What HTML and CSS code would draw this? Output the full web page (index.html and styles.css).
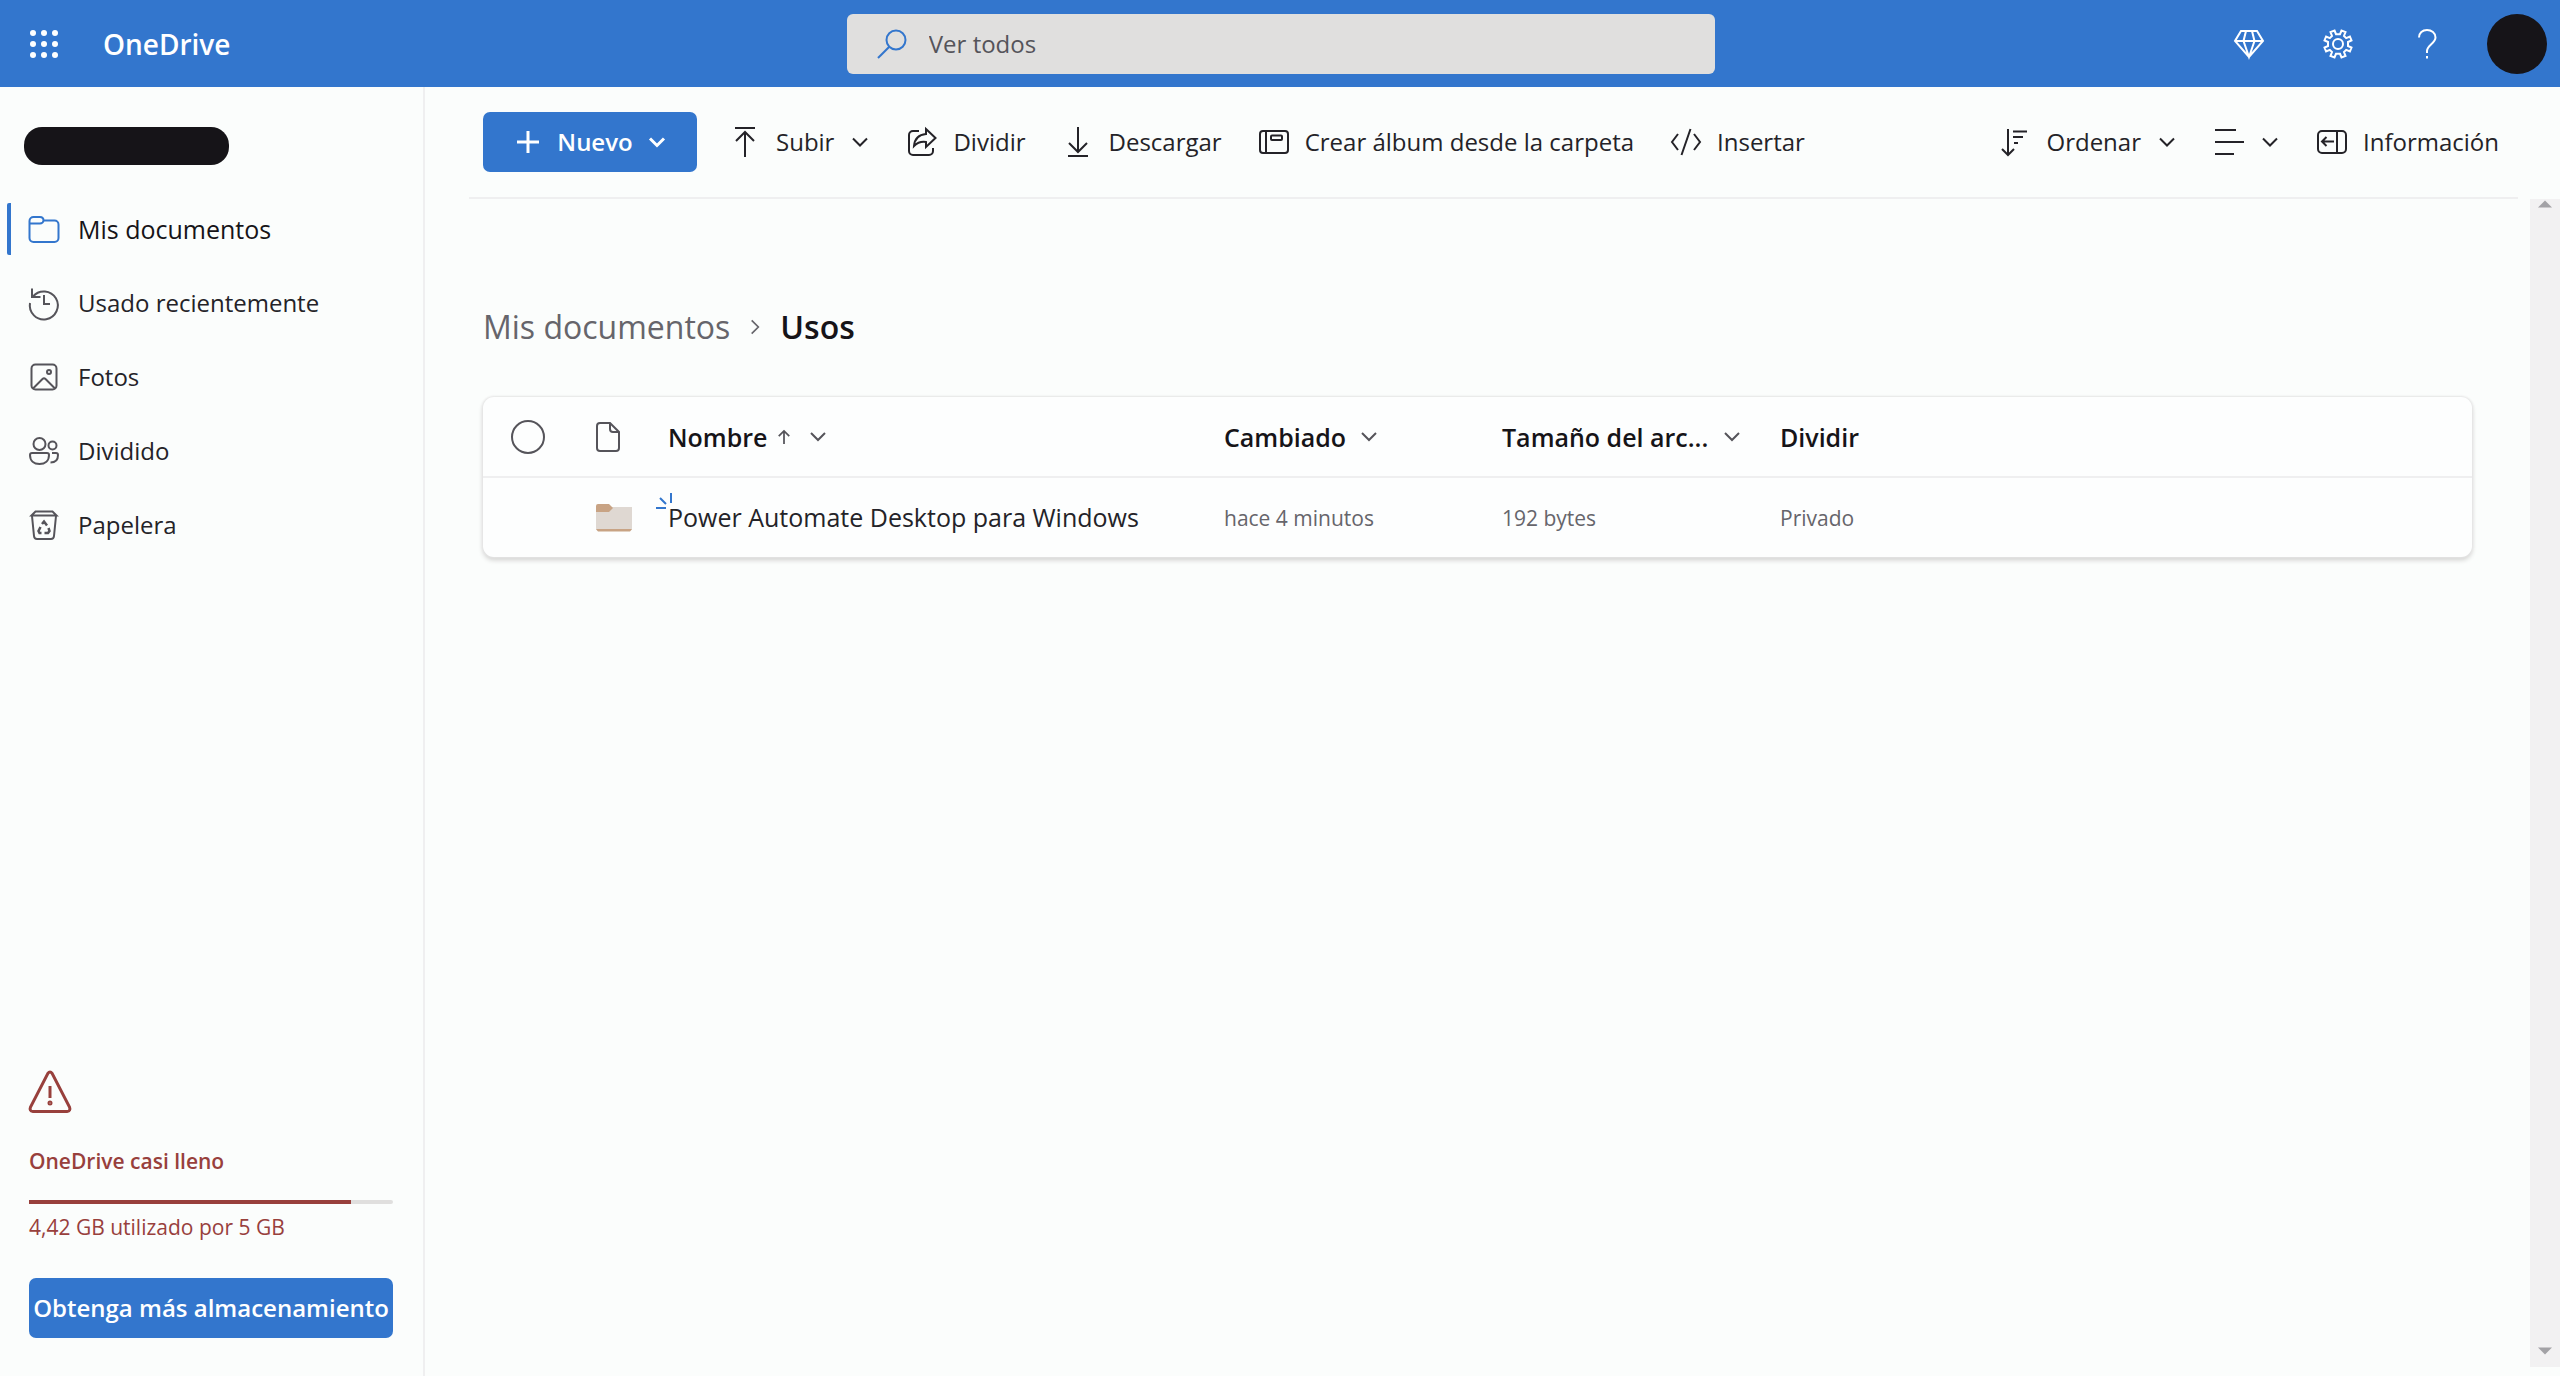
FILE: index.html
```html
<!DOCTYPE html>
<html lang="es">
<head>
<meta charset="utf-8">
<meta name="viewport" content="width=device-width, initial-scale=1">
<title>Usos - OneDrive</title>
<link rel="stylesheet" href="styles.css">
</head>
<body>
<header class="topbar">
  <div class="brand">
    <button class="icon-button launcher" aria-label="Iniciador de aplicaciones">
      <svg class="icon" viewBox="0 0 30 30" fill="currentColor"><circle cx="4" cy="4" r="3"/><circle cx="15" cy="4" r="3"/><circle cx="26" cy="4" r="3"/><circle cx="4" cy="15" r="3"/><circle cx="15" cy="15" r="3"/><circle cx="26" cy="15" r="3"/><circle cx="4" cy="26" r="3"/><circle cx="15" cy="26" r="3"/><circle cx="26" cy="26" r="3"/></svg>
    </button>
    <a class="brand-name" href="#">OneDrive</a>
  </div>
  <label class="search">
    <svg class="icon search-icon" viewBox="0 0 30 30"><circle cx="19" cy="11" r="9.5"/><path d="M12.3 17.7 1 29"/></svg>
    <input class="search-input" type="search" placeholder="Ver todos" aria-label="Buscar">
  </label>
  <div class="top-actions">
    <button class="icon-button" aria-label="Premium"><svg class="icon" viewBox="0 0 30 30"><path d="M7 2h16l6 10-14 16L1 12zM1 12h28M12 2l-2.500 10L15 28l5.500-16L18 2"/></svg></button>
    <button class="icon-button" aria-label="Configuración"><svg class="icon" viewBox="0 0 30 30"><circle cx="15" cy="15" r="5"/><path d="M11.500 1.500 13 5.200h4L18.500 1.500l4 1.600-1.500 3.800 2.200 2.200 3.700-1.600 1.600 4L25 13v4l3.500 1.500-1.600 4-3.700-1.600-2.200 2.200 1.500 3.800-4 1.600L17 24.800h-4l-1.500 3.700-4-1.600L9 23.100l-2.200-2.200-3.700 1.600-1.600-4L5 17v-4l-3.500-1.500 1.600-4 3.700 1.600L9 6.900 7.500 3.100z"/></svg></button>
    <button class="icon-button" aria-label="Ayuda"><svg class="icon" viewBox="0 0 30 30"><path d="M7 8.500C7 4 10.500 1 15 1s8.500 3 8.500 7.500c0 6-8.500 7.500-8.500 13.500v2M15 27v2.500"/></svg></button>
    <button class="avatar" aria-label="Cuenta"></button>
  </div>
</header>
<div class="shell">
  <aside class="sidebar">
    <div class="account-name"></div>
    <nav class="side-nav">
      <a class="nav-item selected" href="#"><svg class="icon" viewBox="0 0 30 30"><path d="M1 7.500V5a4 4 0 0 1 4-4h6.500c2 0 3.500 1.500 3.500 3.500H26a4 4 0 0 1 4 4V22a4 4 0 0 1-4 4H5a4 4 0 0 1-4-4zH11.500C13.500 7.500 15 6 15 4.500" transform="translate(-.500 2)"/></svg>Mis documentos</a>
      <a class="nav-item" href="#"><svg class="icon" viewBox="0 0 30 30"><path d="M3 .500V9h8.500M4 8.500A14 14 0 1 1 1 15M15 7v9h6"/></svg>Usado recientemente</a>
      <a class="nav-item" href="#"><svg class="icon" viewBox="0 0 30 30"><rect x="2.500" y="2.500" width="25" height="25" rx="4"/><circle cx="20" cy="10" r="2"/><path d="m4 26.500 9.500-9.500q1.500-1.500 3 0l9.500 9.500"/></svg>Fotos</a>
      <a class="nav-item" href="#"><svg class="icon" viewBox="0 0 30 30"><circle cx="10.500" cy="8" r="6"/><circle cx="23.500" cy="9.500" r="4"/><path d="M3 17h15q2 0 2 2c0 6-4 9-9.500 9S1 25 1 19q0-2 2-2zM23 17h4q2 0 2 2c0 5-3 7.500-7.500 7.500"/></svg>Dividido</a>
      <a class="nav-item" href="#"><svg class="icon" viewBox="0 0 30 30"><path d="m2.500 5.500 4-4h17l4 4zM3 6l2 20q.300 3 3 3h14q2.700 0 3-3l2-20"/><path d="m13 14 2-2.500 3 4M19.500 18l1 3-1.500 2h-3.500M12.500 23h-2l-1-2 2-4" stroke-width="2.500"/></svg>Papelera</a>
    </nav>
    <section class="storage">
      <svg class="warning-icon" viewBox="0 0 42 42"><path d="M18.800 2.500q2.200-2.800 4.400 0L40.500 36q1.500 4-2.500 4.500H4Q0 40 1.500 36z"/><path d="M21 15v12"/><circle cx="21" cy="32" r="1"/></svg>
      <h2 class="storage-title">OneDrive casi lleno</h2>
      <div class="meter" role="progressbar" aria-label="Almacenamiento" aria-valuenow="88"><div class="meter-fill" style="width: 88.400%"></div></div>
      <a class="storage-text" href="#">4,42 GB utilizado por 5 GB</a>
      <button class="primary upgrade">Obtenga más almacenamiento</button>
    </section>
  </aside>
  <main class="main">
    <div class="toolbar">
      <button class="primary new"><svg class="icon" viewBox="0 0 30 30"><path d="M4 15h22M15 4v22"/></svg>Nuevo<svg class="chevron" viewBox="0 0 16 16"><path d="m1 4.500 7 7 7-7"/></svg></button>
      <button class="command upload"><svg class="icon" viewBox="0 0 30 30"><path d="M5 1h20M15 30V5M6 14l9-9 9 9"/></svg>Subir<svg class="chevron" viewBox="0 0 16 16"><path d="m1 4.500 7 7 7-7"/></svg></button>
      <button class="command"><svg class="icon" viewBox="0 0 30 30"><path d="M12 4H6a4 4 0 0 0-4 4v16a4 4 0 0 0 4 4h16a4 4 0 0 0 4-4v-3"/><path d="m19 2 9.500 9L19 20v-5q-7-1-12 4 1-11 12-12z"/></svg>Dividir</button>
      <button class="command"><svg class="icon" viewBox="0 0 30 30"><path d="M15 0v25M6 16l9 9 9-9M5 29h20"/></svg>Descargar</button>
      <button class="command"><svg class="icon" viewBox="0 0 30 30"><rect x="1" y="4" width="28" height="22" rx="3"/><path d="M7 4v22"/><rect x="12" y="8.500" width="11" height="4.500" rx="1"/></svg>Crear álbum desde la carpeta</button>
      <button class="command"><svg class="icon" viewBox="0 0 30 30"><path d="m7 7-6 8 6 8M23 7l6 8-6 8M19.500 2l-9 26"/></svg>Insertar</button>
      <span class="spacer"></span>
      <button class="command"><svg class="icon" viewBox="0 0 30 30"><path d="M8 2v26M2 22l6 6 6-6M13 4.500h14M13 10h10M14 16h4"/></svg>Ordenar<svg class="chevron" viewBox="0 0 16 16"><path d="m1 4.500 7 7 7-7"/></svg></button>
      <button class="command" aria-label="Ver"><svg class="icon" viewBox="0 0 30 30"><path d="M1 3h21M1 15h29M1 27h19"/></svg><svg class="chevron" viewBox="0 0 16 16"><path d="m1 4.500 7 7 7-7"/></svg></button>
      <button class="command"><svg class="icon" viewBox="0 0 30 30"><rect x="1" y="4" width="28" height="22" rx="4"/><path d="M20 4v22M17 14.500H5M9.500 10 5 14.500 9.500 19"/></svg>Información</button>
    </div>
    <div class="content">
      <div class="page">
        <nav class="breadcrumb" aria-label="Ruta">
          <a class="crumb" href="#">Mis documentos</a>
          <svg class="crumb-chevron" viewBox="0 0 12 20"><path d="m2 2 8 8-8 8"/></svg>
          <span class="crumb-current">Usos</span>
        </nav>
        <div class="card">
          <table class="files">
            <colgroup><col class="col-select"><col class="col-type"><col class="col-name"><col class="col-meta"><col class="col-meta"><col></colgroup>
            <thead>
              <tr>
                <th><input class="select-all" type="checkbox" aria-label="Seleccionar todo"></th>
                <th><svg class="file-icon" viewBox="0 0 26 30"><path d="M4 1h10l9 9v16a3 3 0 0 1-3 3H4a3 3 0 0 1-3-3V4a3 3 0 0 1 3-3zM14 1v6a3 3 0 0 0 3 3h6"/></svg></th>
                <th><span class="head">Nombre<svg class="arrow" viewBox="0 0 16 16"><path d="M8 16V1M2 7l6-6 6 6"/></svg><svg class="chevron" viewBox="0 0 16 16"><path d="m1 4 7 7 7-7"/></svg></span></th>
                <th><span class="head">Cambiado<svg class="chevron" viewBox="0 0 16 16"><path d="m1 4 7 7 7-7"/></svg></span></th>
                <th><span class="head head-size">Tamaño del arc...<svg class="chevron" viewBox="0 0 16 16"><path d="m1 4 7 7 7-7"/></svg></span></th>
                <th>Dividir</th>
              </tr>
            </thead>
            <tbody>
              <tr>
                <td></td>
                <td><svg class="folder-icon" viewBox="0 0 36 28"><path fill="#dfd8d2" d="M0 3h36v21a3 3 0 0 1-3 3H3a3 3 0 0 1-3-3z"/><path fill="#c8a384" d="M0 2a2 2 0 0 1 2-2h11l4 4-4 4H0zM0 25h36l-2 2.500H2z"/></svg></td>
                <td><span class="name-cell"><svg class="new-mark" viewBox="0 0 16 16"><path d="M15 0v10M4 5l6 6M0 15h10"/></svg><a class="file-name" href="#">Power Automate Desktop para Windows</a></span></td>
                <td>hace 4 minutos</td>
                <td>192 bytes</td>
                <td>Privado</td>
              </tr>
            </tbody>
          </table>
        </div>
      </div>
      <div class="scrollbar" aria-hidden="true"><svg class="scroll-arrow" viewBox="0 0 16 8"><path d="m0 8 8-8 8 8z"/></svg><svg class="scroll-arrow" viewBox="0 0 16 8"><path d="m0 0 8 8 8-8z"/></svg></div>
    </div>
  </main>
</div>
</body>
</html>
```
FILE: styles.css
```css
* { box-sizing: border-box; }
body {
  margin: 0;
  height: 100vh;
  display: flex;
  flex-direction: column;
  background: #fbfdfc;
  color: #242328;
  font-family: "Open Sans", "Noto Sans", sans-serif;
  font-size: 25px;
  line-height: 36px;
}
button, input { font: inherit; color: inherit; }
button { border: 0; padding: 0; background: none; white-space: nowrap; }
a { color: inherit; text-decoration: none; }
svg { display: block; flex: none; fill: none; stroke: currentColor; stroke-width: 2; overflow: visible; }
.icon { width: 30px; height: 30px; }
.chevron { width: 16px; height: 16px; }

.topbar {
  display: grid;
  grid-template-columns: 1fr 34% 1fr;
  align-items: center;
  height: 87px;
  flex: none;
  background: #3376cd;
  color: #fff;
}
.brand { display: flex; align-items: center; gap: 44px; padding-left: 29px; }
.brand-name { font-weight: 600; font-size: 28px; }
.launcher svg { stroke: none; fill: currentColor; }
.search {
  display: flex;
  align-items: center;
  gap: 22px;
  height: 60px;
  margin-left: 2px;
  padding: 0 30px;
  border-radius: 6px;
  background: #e0dfde;
}
.search-icon { color: #3376cd; }
.search-input { flex: 1; border: 0; padding: 0; background: none; outline: 0; font-size: 24px; color: #55545a; }
.search-input::placeholder { color: #55545a; opacity: 1; }
.top-actions { display: flex; align-items: center; justify-content: flex-end; gap: 59px; padding-right: 13px; }
.avatar { width: 60px; height: 60px; border-radius: 50%; background: #161418; margin-left: -14px; }

.shell { display: flex; flex: 1; min-height: 0; }
.sidebar {
  display: flex;
  flex-direction: column;
  width: 425px;
  flex: none;
  padding: 40px 30px 38px 0;
  border-right: 2px solid #efeff0;
}
.account-name { width: 205px; height: 38px; margin-left: 24px; border-radius: 18px; background: #161418; }
.side-nav { display: flex; flex-direction: column; gap: 22px; padding: 38px 0 0 7px; font-size: 24px; }
.nav-item { display: flex; align-items: center; gap: 19px; height: 52px; padding-left: 18px; border-left: 4px solid transparent; border-radius: 2px; }
.nav-item .icon { color: #55545a; }
.nav-item.selected { border-color: #3376cd; font-size: 25px; font-weight: 500; color: #161418; }
.nav-item.selected .icon { color: #3376cd; }
.storage { display: flex; flex-direction: column; margin-top: auto; padding-left: 29px; color: #98403c; font-size: 21px; }
.warning-icon { width: 42px; height: 42px; stroke-width: 3; }
.storage-title { margin: 30px 0 21px; font-size: 21px; font-weight: 600; }
.meter { height: 4px; border-radius: 2px; background: #e0dfde; }
.meter-fill { height: 4px; background: #98403c; }
.storage-text { margin: 5px 0 33px; }
.primary { height: 60px; border-radius: 7px; background: #3376cd; color: #fff; font-size: 24px; font-weight: 600; }
.upgrade { display: flex; align-items: center; justify-content: center; }

.main { display: flex; flex: 1; flex-direction: column; min-width: 0; }
.toolbar { display: flex; align-items: center; gap: 37px; height: 112px; flex: none; margin: 0 42px 0 44px; padding: 0 19px 0 14px; border-bottom: 2px solid #efeff0; font-size: 24px; }
.toolbar .chevron { margin: 0 2px; }
.new { display: flex; align-items: center; justify-content: center; gap: 14px; width: 214px; flex: none; }
.new svg { stroke-width: 3; }
.command { display: flex; align-items: center; gap: 16px; }
.upload { margin-left: -4px; }
.spacer { flex: 1; }
.content { display: flex; flex: 1; min-height: 0; }
.page { flex: 1; min-width: 0; padding: 104px 58px 0; }
.breadcrumb { display: flex; align-items: center; gap: 20px; height: 48px; margin-bottom: 46px; font-size: 32px; }
.crumb, .crumb-chevron { color: #66656b; }
.crumb-chevron { width: 10px; height: 18px; }
.crumb-current { font-weight: 600; color: #161418; }
.card { border-radius: 11px; background: #fdfefe; box-shadow: 0 0 2px 1px #e6e6e6, 0 3px 5px #cfcecd; }
.files { width: 100%; table-layout: fixed; border-collapse: collapse; text-align: left; }
.files th, .files td { height: 80px; padding: 0; vertical-align: middle; }
.files th { border-bottom: 2px solid #efeff0; font-weight: 600; color: #161418; }
.files td { color: #66656b; font-size: 21px; }
.col-select { width: 113px; }
.col-type { width: 72px; }
.col-name { width: 556px; }
.col-meta { width: 278px; }
.select-all { display: block; appearance: none; width: 34px; height: 34px; margin: 0 0 0 28px; border: 2px solid #55545a; border-radius: 50%; }
.file-icon { width: 26px; height: 30px; color: #55545a; }
.folder-icon { width: 36px; height: 28px; stroke: none; }
.head { display: flex; align-items: center; gap: 15px; white-space: nowrap; }
.head svg { color: #55545a; }
.arrow { width: 14px; height: 14px; margin: 0 4px 0 -5px; }
.head-size { justify-content: space-between; padding-right: 40px; }
.name-cell { position: relative; display: block; }
.new-mark { position: absolute; left: -12px; top: -6px; width: 16px; height: 16px; color: #3376cd; }
.file-name { color: #242328; font-size: 25px; }
.scrollbar { display: flex; flex-direction: column; align-items: center; justify-content: space-between; width: 30px; margin-bottom: 9px; padding: 1px 0 12px; background: #f2f1f2; }
.scroll-arrow { width: 14px; height: 8px; fill: #a3a2a6; stroke: none; }
```
